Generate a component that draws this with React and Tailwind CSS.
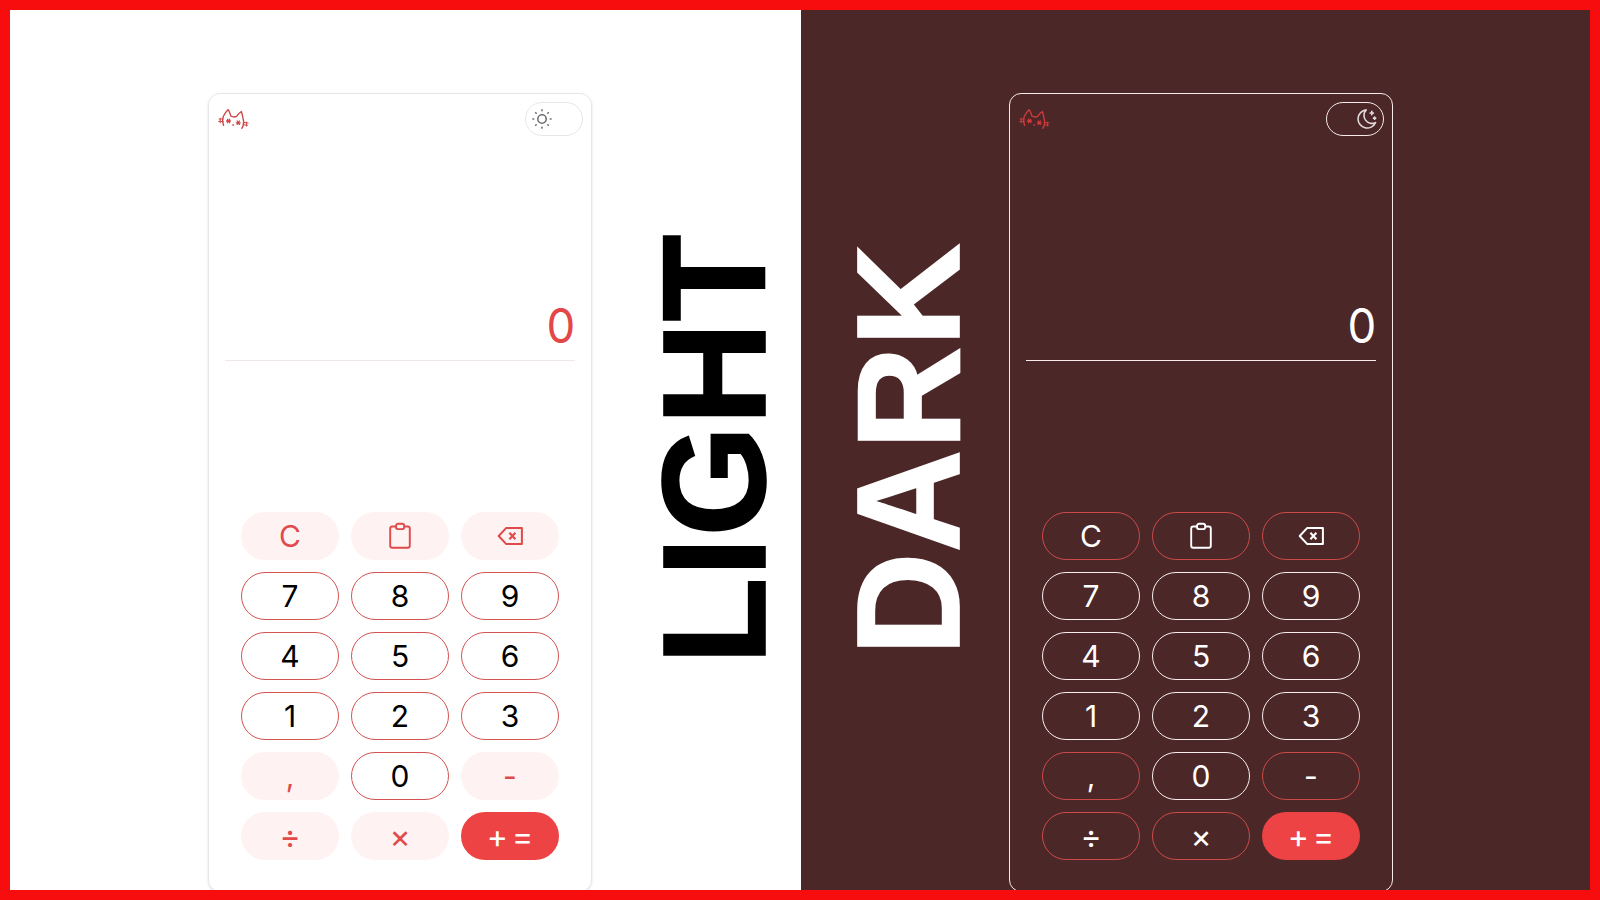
const INTER = "font-['Inter',sans-serif]";

function Cat({ dark }) {
  return (
    <svg width="32" height="24" viewBox="0 0 32 24" fill="none" stroke={dark ? "#d03a3b" : "#cf4747"} strokeWidth="1.35" strokeLinecap="round" strokeLinejoin="round">
      <path d="M5.600 18.400C4.500 15.500 4.400 12 5.300 9.600C6.200 7.500 8 4.700 10.200 2.600C11.400 4.500 12.200 6.700 13 9.200C15 10.100 17 10.200 18.600 9.400C19.600 7.700 21.300 5.700 23.400 4.500C24.200 7 24.900 11 25.600 14C25.800 17 25.500 19.300 23.800 21.200" />
      <path d="M1.200 12h3.600M.8 14.500h4.400M2.200 11.200v4.500M25.600 15.500l4.500.5M25.300 17.700l4.200.5M28.500 15v4" strokeWidth="1.050" />
      <path d="M8.500 14h4M9.400 12.300l2.200 3.300M11.600 12.300l-2.200 3.300M18.300 15.800h4M19.200 14l2.200 3.400M21.400 14l-2.200 3.400M14.800 18h.7" strokeWidth="1.300" />
    </svg>
  );
}

function Sun() {
  return (
    <svg width="20" height="20" viewBox="0 0 20 20" fill="none" stroke="#6f7076" strokeWidth="1.600" strokeLinecap="round">
      <circle cx="10" cy="10" r="4.200" />
      <path d="M10 .9v.8M10 18.300v.8M.9 10h.8M18.300 10h.8M3.700 3.700l.5.500M15.800 15.800l.5.500M3.700 16.300l.5-.5M15.800 4.200l.5-.5" />
    </svg>
  );
}

function Moon() {
  return (
    <svg width="20" height="20" viewBox="0 0 20 20" fill="none" stroke="#e3d9d9" strokeWidth="1.600" strokeLinecap="round" strokeLinejoin="round">
      <path d="M9.200 .9A9.100 9.100 0 1 0 18.500 13.600A8 8 0 0 1 9.200 .9Z" />
      <path d="M14.800 2.400v3.200M13.200 4h3.200M17.600 8.200v2M16.600 9.200h2" strokeWidth="1.700" />
    </svg>
  );
}

function Clipboard() {
  return (
    <svg width="24" height="28" viewBox="0 0 24 28" fill="none" stroke="currentColor" strokeWidth="1.900" strokeLinejoin="round">
      <path d="M8 4.500H4.200a2 2 0 0 0-2 2v17.200a2 2 0 0 0 2 2h15.600a2 2 0 0 0 2-2V6.500a2 2 0 0 0-2-2H16" />
      <rect x="8" y="1.800" width="8.200" height="5.300" rx="2.200" />
    </svg>
  );
}

function Backspace() {
  return (
    <svg width="26" height="20" viewBox="0 0 26 20" fill="none" stroke="currentColor" strokeWidth="2" strokeLinejoin="round">
      <path d="M9.300 1.900H24.900V18.100H9.300L1.700 10Z" />
      <path d="M12.400 6.700l6 6.600M18.400 6.700l-6 6.600" strokeWidth="2.100" />
    </svg>
  );
}

const KEYS = ["C", "clip", "back", "7", "8", "9", "4", "5", "6", "1", "2", "3", ",", "0", "-", "÷", "×", "+ ="];

function Key({ value, dark }) {
  const isDigit = /^\d$/.test(value);
  let look;
  if (value === "+ =") look = "bg-[#ee4344] text-white";
  else if (isDigit) look = dark ? "border border-[#f9eeee] text-white" : "border border-[#d45353] text-black";
  else look = dark ? "border border-[#cc4a4a] text-white" : "bg-[#fef2f2] text-[#e14a4a]";
  const size = /[÷×=]/.test(value) ? "text-[32px] pt-px [word-spacing:-5px]" : "text-[30px]";
  return (
    <button className={`flex h-12 items-center justify-center rounded-3xl leading-9 ${size} ${look}`}>
      {value === "clip" ? <Clipboard /> : value === "back" ? <Backspace /> : value}
    </button>
  );
}

function Calculator({ dark }) {
  return (
    <div className={`${INTER} flex h-[799px] w-[384px] shrink-0 flex-col rounded-xl border px-4 ${dark ? "border-[#f6eaea]" : "border-[#e5e7eb] shadow-sm"}`}>
      <div className="-mr-2 -ml-[7px] flex h-[50px] items-center justify-between">
        <Cat dark={dark} />
        <div className={`flex h-[34px] w-[58px] items-center rounded-full border px-[6px] ${dark ? "justify-end border-[#f6eaea]" : "border-[#e5e7eb]"}`}>
          {dark ? <Moon /> : <Sun />}
        </div>
      </div>
      <div className={`flex h-[217px] items-end justify-end border-b pb-2 text-5xl leading-[52px] ${dark ? "border-[#f6eaea] text-white" : "border-[#efe6e8] text-[#e34747]"}`}>
        <span className="origin-right scale-x-95">0</span>
      </div>
      <div className="mt-[151px] grid grid-cols-3 gap-3 px-4">
        {KEYS.map((k) => <Key key={k} value={k} dark={dark} />)}
      </div>
    </div>
  );
}

function Word({ children, className }) {
  return (
    <div className={`flex h-[440px] w-[150px] shrink-0 rotate-180 scale-y-[0.970] items-start leading-[150px] font-bold whitespace-nowrap [writing-mode:vertical-rl] [-webkit-text-stroke:1.6px_currentColor] font-['Liberation_Sans',Arial,sans-serif] text-[147px] ${className}`}>
      {children}
    </div>
  );
}

export default function App() {
  return (
    <main className="flex h-[900px] w-[1600px] overflow-hidden border-[10px] border-[#f80d0e] bg-white">
      <section className="flex w-[791px] shrink-0 overflow-hidden bg-white pt-[83px] pl-[198px]">
        <Calculator />
        <Word className="mt-[138px] ml-[47px] tracking-[0.6px] text-black">LIGHT</Word>
      </section>
      <section className="flex flex-1 overflow-hidden bg-[#4b2728] pt-[83px] pl-[32px] text-white">
        <Word className="mt-[129px]">DARK</Word>
        <div className="ml-[26px] flex"><Calculator dark /></div>
      </section>
    </main>
  );
}
